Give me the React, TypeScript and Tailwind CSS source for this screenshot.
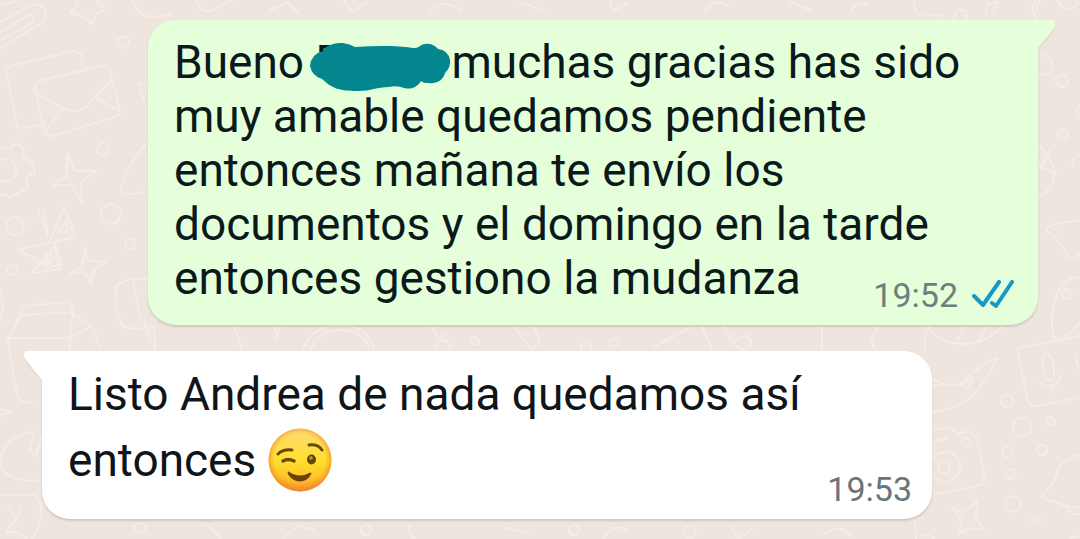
import type { ReactNode } from "react";

function Wallpaper() {
  return (
    <svg
      className="absolute inset-0 h-full w-full"
      viewBox="0 0 1080 539"
      preserveAspectRatio="xMidYMid slice"
      fill="none"
      stroke="#f5ede5"
      strokeWidth="2"
      strokeLinecap="round"
      strokeLinejoin="round"
      aria-hidden="true"
    >
      {/* paperclip, stars, cloud */}
      <path d="M-4 24 30 6q11-5 15 5 2 9-6 14L4 46l-8 4M-2 34 28 15q6-1 6 4 0 3-4 5L2 40M0 3q10 3 18-4" />
      <path d="m76-4 2 8-8 9 13 3 10 8 2-9 11-7-8-4V-4M132-4q2 20 20 21 12 0 20-4" />
      <path d="m123 36 5 2 1 5-5 5-6-3-1-5z" />
      {/* envelopes */}
      <path d="M83 67 81 55q-2-4-8-4L11 66q-5 1-5 5l11 53q1 5 6 4l18-3" />
      <path d="M39 81 101 66q7-1 9 5l10 39q0 6-5 7l-62 19q-6 1-8-5L35 89q0-6 4-8zM38 94q23 15 36 17 10 0 17-9l20-22M45 132l18-24M97 99l22 12" />
      <path d="M150 82l-12 2 6 16M150 140q-22 22-29 48 0 8 8 6l20-2" />
      <circle cx="103" cy="149" r="6" />
      {/* gear and sparkle */}
      <path d="M-2 147 10 149l5-6 9 5-1 10 10 5 2 10-9 4 2 10-10 6-8 4-8-3-14 4M-2 160q18-4 18 10 0 14-18 11" />
      <path d="m67 153 8 18 22 0-16 11 1 20-11-17-18 0 14-9z" />
      <circle cx="15" cy="226" r="9" />
      <circle cx="111" cy="214" r="10" />
      <circle cx="130" cy="244" r="5" />
      <path d="m38 210 10 26-4-26M64 207l11 30-20 5 6 22-13 4-10-8-20-10 32-8 14-35M58 232l8-10 2 10zM45 262l5-11 4 9z" />
      <circle cx="12" cy="270" r="5" />
      <path d="m85 248 4 13 17 1-13 9-2 13-6-12-15 2 13-9zM52 248 32 273l28-4-6-22M39 262l9-7 3 9z" />
      {/* milk carton */}
      <path d="m20 314 3-8 47-4 3 8-3 28H8l13-23 52-3M8 338q4 35 10 59 4 6 14 6M70 338l22-12 8 22M0 290l3 18-4 14M70 338v12M72 314l20 12" />
      <path d="M147 279q-24-2-31 8-3 22 7 39 14 6 33 0M133 281l8 41M154 326l1 24M144 320l6 20" />
      <path d="m0 409 12 3-14 4M34 432q-28 2-34 28Q0 476 22 480l18 1M34 432l-4 18 6 6 5-18M0 495l34 0q8 5 7 17 0 14-10 28M8 506l8 14-10 12 12 0 10 8M20 510l-4 10" />
      <circle cx="140" cy="528" r="5" />
      {/* gap between the messages */}
      <path d="M234 326l8 24M275 326l2 13 3-13M302 350q10-25 39-25 28 1 33 25M310 350q10-20 31-20 23 0 29 20M432 326l6 12 5-3M514 326l18 24 8-10-7-15M652 348l48-26 12 28M724 326q10 24 22 24 10-10 0-14-8-1-12 8M822 326v24M878 326l-7 15 5 9" />
      <circle cx="475" cy="341" r="4" />
      <circle cx="443" cy="347" r="7" />
      <circle cx="586" cy="347" r="5" />
      <circle cx="614" cy="343" r="4" />
      {/* right side */}
      <path d="M914-3q-1 16 6 17l22 2M954 20q0-10 8-10 6 1 5 8M985 17l3-13 9-2-3 10M1036 10l4-11M1058-2q0 9 10 11 8-1 10-7M1036 18l-4-10 4-6" />
      <path d="M1042 54q12 4 10 14-3 9-14 6" />
      <circle cx="1062" cy="81" r="6" />
      <circle cx="1063" cy="134" r="5" />
      <circle cx="1085" cy="112" r="8" />
      <path d="M1080 154q-12 8-6 13M1040 146q12 12 16 29-7-5-16-9M1040 168l10-18M1038 197q14-6 16-22" />
      <path d="m1082 220-28 4q-10 4-6 8 14 9 20 26 7 5 14-9" />
      <path d="M1082 277q-16 0-23 12-8 18-7 35 0 17 8 16 9-5 22-19" />
      <circle cx="1067" cy="294" r="5" />
      <path d="M929 326q-6 10-4 24M929 327q10 17 36 17 24-2 39-19M958 340l5-12M980 338l5-10" />
      <path d="m1082 336-60 11q-5 2-4 7l10 46q2 7 9 6l45-9M1043 357q2-4 6-2 5 3 5 20-1 7-6 5-6-3-5-23zM1040 382q14 12 22-8M1052 386v7M1076 358q2 12 6 14" />
      {/* airplane, bubbles, camera */}
      <path d="M928 375q14 13 32 9 20-20 37-26-2 8-20 33-16 18-50 22M960 384q11 10 12-6l-10 6M928 385l14 0" />
      <circle cx="1007" cy="401" r="6" />
      <circle cx="1022" cy="427" r="9" />
      <circle cx="1051" cy="421" r="4" />
      <circle cx="1007" cy="452" r="5" />
      <circle cx="1042" cy="450" r="5" />
      <circle cx="1011" cy="474" r="5" />
      <circle cx="1013" cy="504" r="8" />
      <path d="m932 430 18-3 8 7q12-5 16 0 4 2 11 46-1 5-8 6l-42 8" />
      <circle cx="945" cy="467" r="15" />
      <circle cx="944" cy="467" r="6" />
      <circle cx="966" cy="442" r="4" />
      <path d="M936 441l12-3M952 507l10 5q7-2 15-11 1 10-2 16l9 13-14-2-10 5 1-14zM915 520l1 20M920 536q10-4 14 4M1032 519q5-4 8 1-5 6-8-1z" />
      <path d="M1082 454q-18 4-24 15-2 14-16 26 1 5 10 6l14 5 16 2M1066 506q4 10 16 8M1070 538l12-2" />
      {/* top and bottom edges */}
      <path d="M196 0q4 15 18 10L232 0M270 10l18-7 10 10M344 0l8 12 14-10M430 11q15-14 31 0M520 2l25 9M610 0l3 11 15-8M705 12q9-16 23-6M790 2l22 9M850 13q6-14 17-8" />
      <path d="M202 524q12 3 18 15M284 538l14-13 16 5M410 525q-4 8 5 14M505 528l24 5M604 539q6-17 24-9M730 525l8 14 14-10M824 534q18-11 27 3" />
      <circle cx="366" cy="530" r="5" />
      <circle cx="574" cy="530" r="5" />
      <circle cx="690" cy="532" r="6" />
    </svg>
  );
}

function Redaction() {
  return (
    <span className="relative -ml-1 inline-block w-[140px] pl-1">
      D
      <svg
        className="absolute -left-px -top-1 h-[60px] w-[142px]"
        viewBox="0 0 142 60"
        aria-hidden="true"
      >
        <path
          d="M0 35Q1 23 13 20C17 13 25 12 33 12Q40 13 45 16C64 15 84 14 103 17Q108 17 110 15C116 11 124 13 128 18Q138 19 140 29Q141 36 135 42C133 50 126 53 118 52Q113 52 111 50C107 56 102 59 94 57Q87 54 79 56C67 56 61 60 48 60C28 60 22 57 12 48Q2 45 0 35Z"
          fill="#03868d"
        />
      </svg>
    </span>
  );
}

function WinkEmoji() {
  return (
    <svg
      className="inline-block size-16 align-[-16px]"
      viewBox="0 0 64 64"
      role="img"
      aria-label="Guiño"
    >
      <defs>
        <linearGradient id="face" x1="0.5" y1="0" x2="0.5" y2="1">
          <stop offset="0" stopColor="#ffda76" />
          <stop offset="0.5" stopColor="#ffe02e" />
          <stop offset="0.78" stopColor="#ffc329" />
          <stop offset="1" stopColor="#f9902d" />
        </linearGradient>
        <radialGradient id="rim" cx="0.5" cy="0.48" r="0.52">
          <stop offset="0.76" stopColor="#f79a25" stopOpacity="0" />
          <stop offset="1" stopColor="#ed7e26" stopOpacity="0.75" />
        </radialGradient>
      </defs>
      <circle cx="32" cy="32" r="31.5" fill="url(#face)" />
      <circle cx="32" cy="32" r="31.5" fill="url(#rim)" />
      <g fill="none" stroke="#6a4907" strokeLinecap="round">
        <path d="M10 26Q15 21 24 22" strokeWidth="3" />
        <path d="M41 17Q50 16 54 22" strokeWidth="3" />
        <path d="M15 33Q20 30 26 33" strokeWidth="3.5" />
      </g>
      <ellipse cx="43.5" cy="31.500" rx="4.500" ry="5" fill="#664507" />
      <circle cx="43" cy="30" r="1.800" fill="#b99661" />
      <path
        d="M20.500 43.500Q31 51 42.500 44.500Q44 44.500 43 46.500C38 56 25 55.500 20 46Q19 43.500 20.500 43.500Z"
        fill="#6a4005"
      />
    </svg>
  );
}

function ReadTicks() {
  return (
    <svg
      className="h-[30px] w-[42px]"
      viewBox="0 0 42 30"
      fill="none"
      stroke="#1799c8"
      strokeWidth="4"
      strokeLinecap="round"
      strokeLinejoin="round"
      role="img"
      aria-label="Leído"
    >
      <path d="m2 16 9 9L27 2M20 23l4 3L40 2" />
    </svg>
  );
}

type BubbleProps = { mine?: boolean; time: string; children: ReactNode };

function Bubble({ mine = false, time, children }: BubbleProps) {
  return (
    <article
      className={
        mine
          ? "relative ml-[148px] mr-[42px] rounded-[28px] rounded-tr-none bg-[#e4ffda] text-[#0b191b] shadow-[0_2px_2px_rgba(90,70,50,0.18)]"
          : "relative ml-[42px] mr-[148px] rounded-[28px] rounded-tl-none bg-white text-[#0f1519] shadow-[0_2px_2px_rgba(90,70,50,0.18)]"
      }
    >
      <svg
        className={
          mine
            ? "absolute -right-[18px] top-0 h-[30px] w-5"
            : "absolute -left-[19px] top-0 h-[30px] w-5 -scale-x-100"
        }
        viewBox="0 0 20 30"
        fill={mine ? "#e4ffda" : "#ffffff"}
        aria-hidden="true"
      >
        <path d="M2 29 17 11Q20 7 19 5V7L17 12 2 30Z" fill="#d9d0c6" />
        <path d="M0 0H15Q20 0 19 5Q18 8 15 11L2 28H0Z" />
      </svg>
      <div
        className={
          mine
            ? "flow-root pb-[10px] pl-[26px] pr-6 pt-[15px] text-[46px] leading-[54px]"
            : "flow-root pb-[10px] pl-[26px] pr-5 pt-[10px] text-[46px] leading-[66px]"
        }
      >
        {children}
        <span
          className={
            mine
              ? "float-right mt-6 flex items-center gap-3.5 text-[34px] leading-10 text-[#6d7f7e]"
              : "float-right mt-[42px] text-[34px] leading-10 text-[#6b7479]"
          }
        >
          <time dateTime={time}>{time}</time>
          {mine && <ReadTicks />}
        </span>
      </div>
    </article>
  );
}

export default function App() {
  return (
    <main className="relative min-h-screen overflow-hidden bg-[#ede5de] font-[Roboto,sans-serif]">
      <Wallpaper />
      <section className="relative flex flex-col gap-[26px] py-5" aria-label="Conversación">
        <Bubble mine time="19:52">
          Bueno <Redaction />
          muchas gracias has sido muy amable quedamos pendiente entonces mañana te envío los
          documentos y el domingo en la tarde entonces gestiono la mudanza
        </Bubble>
        <Bubble time="19:53">
          Listo Andrea de nada quedamos así entonces <WinkEmoji />
        </Bubble>
      </section>
    </main>
  );
}
